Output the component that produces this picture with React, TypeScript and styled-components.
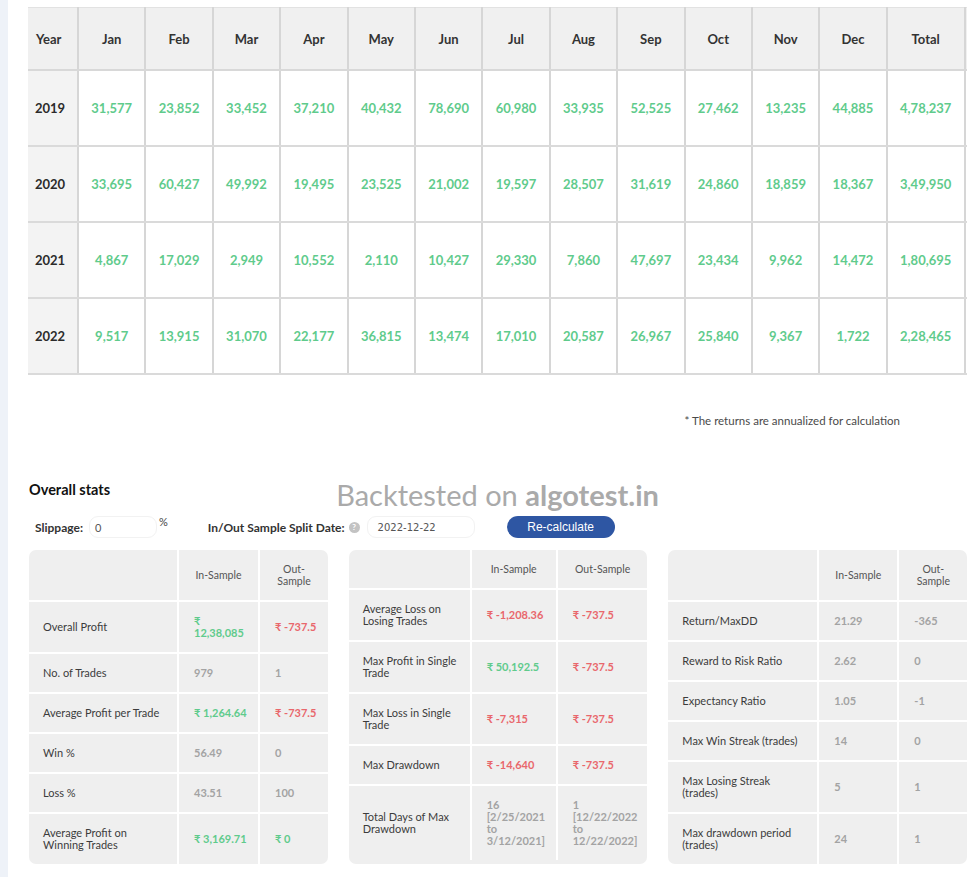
import React from "react";
import styled, { createGlobalStyle } from "styled-components";

type Tone = "green" | "red" | "plain";

interface StatRow {
  label: string;
  inSample: string;
  outSample: string;
  inTone: Tone;
  outTone: Tone;
}

interface StatCardData {
  cols: number[];
  headOut: string;
  rows: StatRow[];
}

const months = ["Jan", "Feb", "Mar", "Apr", "May", "Jun", "Jul", "Aug", "Sep", "Oct", "Nov", "Dec"];

const yearly: { year: string; values: string[]; total: string }[] = [
  {
    year: "2019",
    values: ["31,577", "23,852", "33,452", "37,210", "40,432", "78,690", "60,980", "33,935", "52,525", "27,462", "13,235", "44,885"],
    total: "4,78,237",
  },
  {
    year: "2020",
    values: ["33,695", "60,427", "49,992", "19,495", "23,525", "21,002", "19,597", "28,507", "31,619", "24,860", "18,859", "18,367"],
    total: "3,49,950",
  },
  {
    year: "2021",
    values: ["4,867", "17,029", "2,949", "10,552", "2,110", "10,427", "29,330", "7,860", "47,697", "23,434", "9,962", "14,472"],
    total: "1,80,695",
  },
  {
    year: "2022",
    values: ["9,517", "13,915", "31,070", "22,177", "36,815", "13,474", "17,010", "20,587", "26,967", "25,840", "9,367", "1,722"],
    total: "2,28,465",
  },
];

const row = (label: string, inSample: string, outSample: string, inTone: Tone, outTone: Tone): StatRow => ({
  label,
  inSample,
  outSample,
  inTone,
  outTone,
});

const cards: StatCardData[] = [
  {
    cols: [149, 81, 69],
    headOut: "Out-\nSample",
    rows: [
      row("Overall Profit", "₹\n12,38,085", "₹ -737.5", "green", "red"),
      row("No. of Trades", "979", "1", "plain", "plain"),
      row("Average Profit per Trade", "₹ 1,264.64", "₹ -737.5", "green", "red"),
      row("Win %", "56.49", "0", "plain", "plain"),
      row("Loss %", "43.51", "100", "plain", "plain"),
      row("Average Profit on\nWinning Trades", "₹ 3,169.71", "₹ 0", "green", "green"),
    ],
  },
  {
    cols: [122, 86, 91],
    headOut: "Out-Sample",
    rows: [
      row("Average Loss on\nLosing Trades", "₹ -1,208.36", "₹ -737.5", "red", "red"),
      row("Max Profit in Single\nTrade", "₹ 50,192.5", "₹ -737.5", "green", "red"),
      row("Max Loss in Single\nTrade", "₹ -7,315", "₹ -737.5", "red", "red"),
      row("Max Drawdown", "₹ -14,640", "₹ -737.5", "red", "red"),
      row(
        "Total Days of Max\nDrawdown",
        "16\n[2/25/2021\nto\n3/12/2021]",
        "1\n[12/22/2022\nto\n12/22/2022]",
        "plain",
        "plain"
      ),
    ],
  },
  {
    cols: [150, 80, 69],
    headOut: "Out-\nSample",
    rows: [
      row("Return/MaxDD", "21.29", "-365", "plain", "plain"),
      row("Reward to Risk Ratio", "2.62", "0", "plain", "plain"),
      row("Expectancy Ratio", "1.05", "-1", "plain", "plain"),
      row("Max Win Streak (trades)", "14", "0", "plain", "plain"),
      row("Max Losing Streak\n(trades)", "5", "1", "plain", "plain"),
      row("Max drawdown period\n(trades)", "24", "1", "plain", "plain"),
    ],
  },
];

const toneColor: Record<Tone, string> = {
  green: "#5fcb8c",
  red: "#e9676c",
  plain: "#a3a3a3",
};

const GlobalStyle = createGlobalStyle`
  body {
    margin: 0;
    background: #eef2f8;
    font-family: Lato, "Noto Sans", sans-serif;
  }
`;

const Page = styled.div`
  margin-left: 8px;
  min-height: 877px;
  background: #ffffff;
  padding: 7px 0 0 20px;
  box-sizing: border-box;
`;

const TableScroller = styled.div`
  width: 939px;
  overflow: hidden;
`;

const YearTable = styled.table`
  border-collapse: collapse;
  table-layout: fixed;
  width: 1017px;
`;

const Col = styled.col<{ $w: number }>`
  width: ${(p) => p.$w}px;
`;

const HeadCell = styled.th<{ $left?: boolean }>`
  height: 61px;
  background: #f0f0f0;
  border-top: 1px solid #e2e2e2;
  border-bottom: 2px solid #d8d8d8;
  border-right: 2px solid #d6d6d6;
  padding: 0 8px;
  text-align: ${(p) => (p.$left ? "left" : "center")};
  font-size: 13px;
  font-weight: 700;
  color: #333333;
`;

const YearCell = styled.td`
  height: 72px;
  background: #f3f3f3;
  border-bottom: 2px solid #dadada;
  border-right: 2px solid #d6d6d6;
  padding: 0 7px;
  font-size: 13px;
  font-weight: 700;
  color: #2b2b2b;
`;

const ValueCell = styled.td`
  height: 72px;
  background: #ffffff;
  border-bottom: 2px solid #dadada;
  border-right: 2px solid #d6d6d6;
  text-align: center;
  font-size: 13px;
  font-weight: 700;
  color: #5fcb8c;
`;

const Note = styled.div`
  width: 939px;
  margin-top: 38px;
  padding-right: 67px;
  box-sizing: border-box;
  text-align: right;
  font-size: 11.5px;
  line-height: 16px;
  color: #4a4a4a;
`;

const StatsSection = styled.section`
  position: relative;
  width: 939px;
  margin-top: 52px;
  padding-left: 1px;
  box-sizing: border-box;
`;

const Heading = styled.h3`
  margin: 0;
  font-size: 14.5px;
  line-height: 18px;
  font-weight: 700;
  color: #111111;
`;

const Watermark = styled.div`
  position: absolute;
  top: -2px;
  left: 50%;
  transform: translateX(-50%);
  white-space: nowrap;
  font-size: 29px;
  line-height: 32px;
  color: #aaaaaa;
  pointer-events: none;

  b {
    font-weight: 700;
  }
`;

const Controls = styled.div`
  display: flex;
  align-items: center;
  height: 24px;
  margin-top: 16px;
  padding-left: 6px;
`;

const FieldLabel = styled.span`
  font-size: 12px;
  font-weight: 700;
  color: #333333;
`;

const TextBox = styled.div<{ $w: number; $mono?: boolean }>`
  width: ${(p) => p.$w}px;
  height: 22px;
  box-sizing: border-box;
  margin-left: ${(p) => (p.$mono ? 7 : 6)}px;
  padding: 0 ${(p) => (p.$mono ? 10 : 5)}px;
  display: flex;
  align-items: center;
  border: 1px solid #f2f2f2;
  border-radius: 9px;
  font-family: ${(p) => (p.$mono ? '"DejaVu Sans", sans-serif' : 'Lato, sans-serif')};
  font-size: ${(p) => (p.$mono ? 10 : 11)}px;
  color: #555555;
`;

const Percent = styled.span`
  align-self: flex-start;
  margin: 0 40px 0 2px;
  font-size: 11px;
  color: #444444;
`;

const Help = styled.span`
  width: 11px;
  height: 11px;
  margin-left: 4px;
  border-radius: 50%;
  background: #c3c3c3;
  color: #ffffff;
  font-size: 8px;
  font-weight: 700;
  line-height: 11px;
  text-align: center;
`;

const Button = styled.button`
  width: 108px;
  height: 22px;
  margin-left: 32px;
  border: none;
  border-radius: 11px;
  background: #2e56a3;
  color: #ffffff;
  font-family: "Liberation Sans", Arial, sans-serif;
  font-size: 12px;
  padding: 0;
  cursor: pointer;
`;

const Cards = styled.div`
  display: flex;
  gap: 21px;
  margin-top: 11px;
`;

const Card = styled.div<{ $w: number }>`
  width: ${(p) => p.$w}px;
  background: #efefef;
  border-radius: 7px;
  overflow: hidden;
`;

const StatTable = styled.table`
  width: 100%;
  border-collapse: collapse;
  table-layout: fixed;
`;

const StatHead = styled.th`
  padding: 13px 6px;
  border-right: 2px solid #ffffff;
  border-bottom: 2px solid #ffffff;
  font-size: 10.5px;
  line-height: 12px;
  font-weight: 400;
  color: #555555;
  text-align: center;
  white-space: pre-line;

  &:last-child {
    border-right: none;
  }
`;

const LabelCell = styled.td`
  padding: 13px 6px 13px 14px;
  border-right: 2px solid #ffffff;
  border-bottom: 2px solid #ffffff;
  font-size: 11px;
  line-height: 12px;
  color: #3c3c3c;
  white-space: pre-line;

  tr:last-child & {
    border-bottom: none;
  }
`;

const StatValue = styled.td<{ $tone: Tone }>`
  padding: 13px 4px 13px 15px;
  border-right: 2px solid #ffffff;
  border-bottom: 2px solid #ffffff;
  font-size: 11px;
  line-height: 12px;
  font-weight: 700;
  color: ${(p) => toneColor[p.$tone]};
  white-space: pre-line;

  &:last-child {
    border-right: none;
  }
  tr:last-child & {
    border-bottom: none;
  }
`;

const StatCard: React.FC<{ data: StatCardData }> = ({ data }) => {
  const width = data.cols.reduce((a, b) => a + b, 0);
  return (
    <Card $w={width}>
      <StatTable>
        <colgroup>
          {data.cols.map((w, i) => (
            <Col key={i} $w={w} />
          ))}
        </colgroup>
        <thead>
          <tr>
            <StatHead />
            <StatHead>In-Sample</StatHead>
            <StatHead>{data.headOut}</StatHead>
          </tr>
        </thead>
        <tbody>
          {data.rows.map((r) => (
            <tr key={r.label}>
              <LabelCell>{r.label}</LabelCell>
              <StatValue $tone={r.inTone}>{r.inSample}</StatValue>
              <StatValue $tone={r.outTone}>{r.outSample}</StatValue>
            </tr>
          ))}
        </tbody>
      </StatTable>
    </Card>
  );
};

const App: React.FC = () => {
  return (
    <>
      <GlobalStyle />
      <Page>
        <TableScroller>
          <YearTable>
            <colgroup>
              <Col $w={50} />
              {months.map((m) => (
                <Col key={m} $w={67.4} />
              ))}
              <Col $w={78} />
              <Col $w={80} />
            </colgroup>
            <thead>
              <tr>
                <HeadCell $left>Year</HeadCell>
                {months.map((m) => (
                  <HeadCell key={m}>{m}</HeadCell>
                ))}
                <HeadCell>Total</HeadCell>
                <HeadCell />
              </tr>
            </thead>
            <tbody>
              {yearly.map((y) => (
                <tr key={y.year}>
                  <YearCell>{y.year}</YearCell>
                  {y.values.map((v, i) => (
                    <ValueCell key={i}>{v}</ValueCell>
                  ))}
                  <ValueCell>{y.total}</ValueCell>
                  <ValueCell />
                </tr>
              ))}
            </tbody>
          </YearTable>
        </TableScroller>

        <Note>* The returns are annualized for calculation</Note>

        <StatsSection>
          <Heading>Overall stats</Heading>
          <Watermark>
            Backtested on <b>algotest.in</b>
          </Watermark>
          <Controls>
            <FieldLabel>Slippage:</FieldLabel>
            <TextBox $w={68}>0</TextBox>
            <Percent>%</Percent>
            <FieldLabel>In/Out Sample Split Date:</FieldLabel>
            <Help>?</Help>
            <TextBox $w={108} $mono>
              2022-12-22
            </TextBox>
            <Button>Re-calculate</Button>
          </Controls>
          <Cards>
            {cards.map((c, i) => (
              <StatCard key={i} data={c} />
            ))}
          </Cards>
        </StatsSection>
      </Page>
    </>
  );
};

export default App;
